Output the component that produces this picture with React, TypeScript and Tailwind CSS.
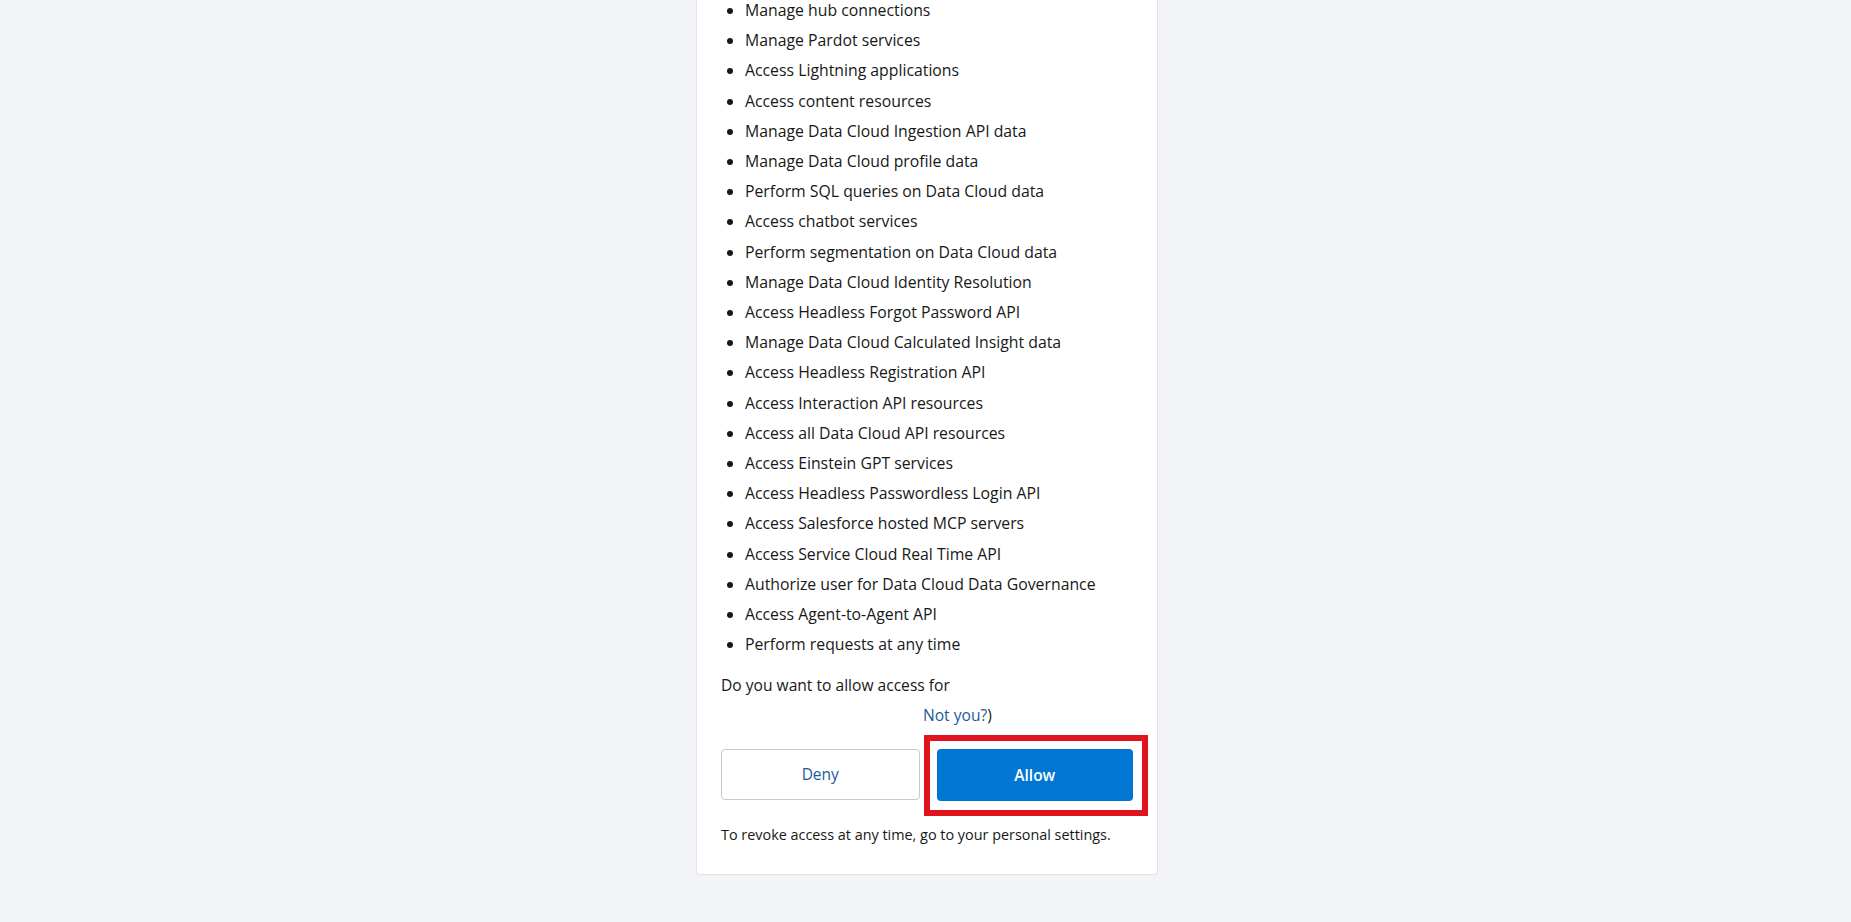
const permissions = [
  'Manage hub connections',
  'Manage Pardot services',
  'Access Lightning applications',
  'Access content resources',
  'Manage Data Cloud Ingestion API data',
  'Manage Data Cloud profile data',
  'Perform SQL queries on Data Cloud data',
  'Access chatbot services',
  'Perform segmentation on Data Cloud data',
  'Manage Data Cloud Identity Resolution',
  'Access Headless Forgot Password API',
  'Manage Data Cloud Calculated Insight data',
  'Access Headless Registration API',
  'Access Interaction API resources',
  'Access all Data Cloud API resources',
  'Access Einstein GPT services',
  'Access Headless Passwordless Login API',
  'Access Salesforce hosted MCP servers',
  'Access Service Cloud Real Time API',
  'Authorize user for Data Cloud Data Governance',
  'Access Agent-to-Agent API',
  'Perform requests at any time',
];

const App = () => {
  return (
    <div
      className="flex min-h-[922px] w-full justify-center bg-[#f3f4f8] pl-[3px] text-[#181818]"
      style={{ fontFamily: '"Open Sans", "Noto Sans", Arial, sans-serif' }}
    >
      <div className="h-fit w-[462px] rounded-b-[4px] border-x border-b border-[#e2e2e2] bg-white px-6 pb-[29px]">
        {/* Scope list */}
        <ul className="-mt-[5px] list-disc pl-6 text-[15.8px] leading-[30.2px] marker:text-[#181818]">
          {permissions.map((item) => (
            <li key={item}>{item}</li>
          ))}
        </ul>

        <div className="mt-[12px] text-[15.6px] leading-[29.5px]">
          <p>Do you want to allow access for</p>
          <p className="pl-[202px]">
            <span className="text-[#1b5b9a]">Not you?</span>
            <span>)</span>
          </p>
        </div>

        {/* Actions */}
        <div className="mt-[19px] flex gap-[17px]">
          <button
            type="button"
            className="h-[51px] flex-1 rounded-[4px] border border-[#c9c9c9] bg-white text-[15.5px] text-[#1b5b9a]"
          >
            Deny
          </button>
          <div className="relative flex-1">
            <span className="pointer-events-none absolute -top-[14px] -right-[15px] -bottom-[15px] -left-[13px] border-[6px] border-[#e0141e]" />
            <button
              type="button"
              className="h-[52px] w-full rounded-[4px] bg-[#0176d3] text-[15.5px] font-semibold text-white"
            >
              Allow
            </button>
          </div>
        </div>

        <p className="mt-[24px] text-[14.4px] leading-[20px]">
          To revoke access at any time, go to your personal settings.
        </p>
      </div>
    </div>
  );
};

export default App;
